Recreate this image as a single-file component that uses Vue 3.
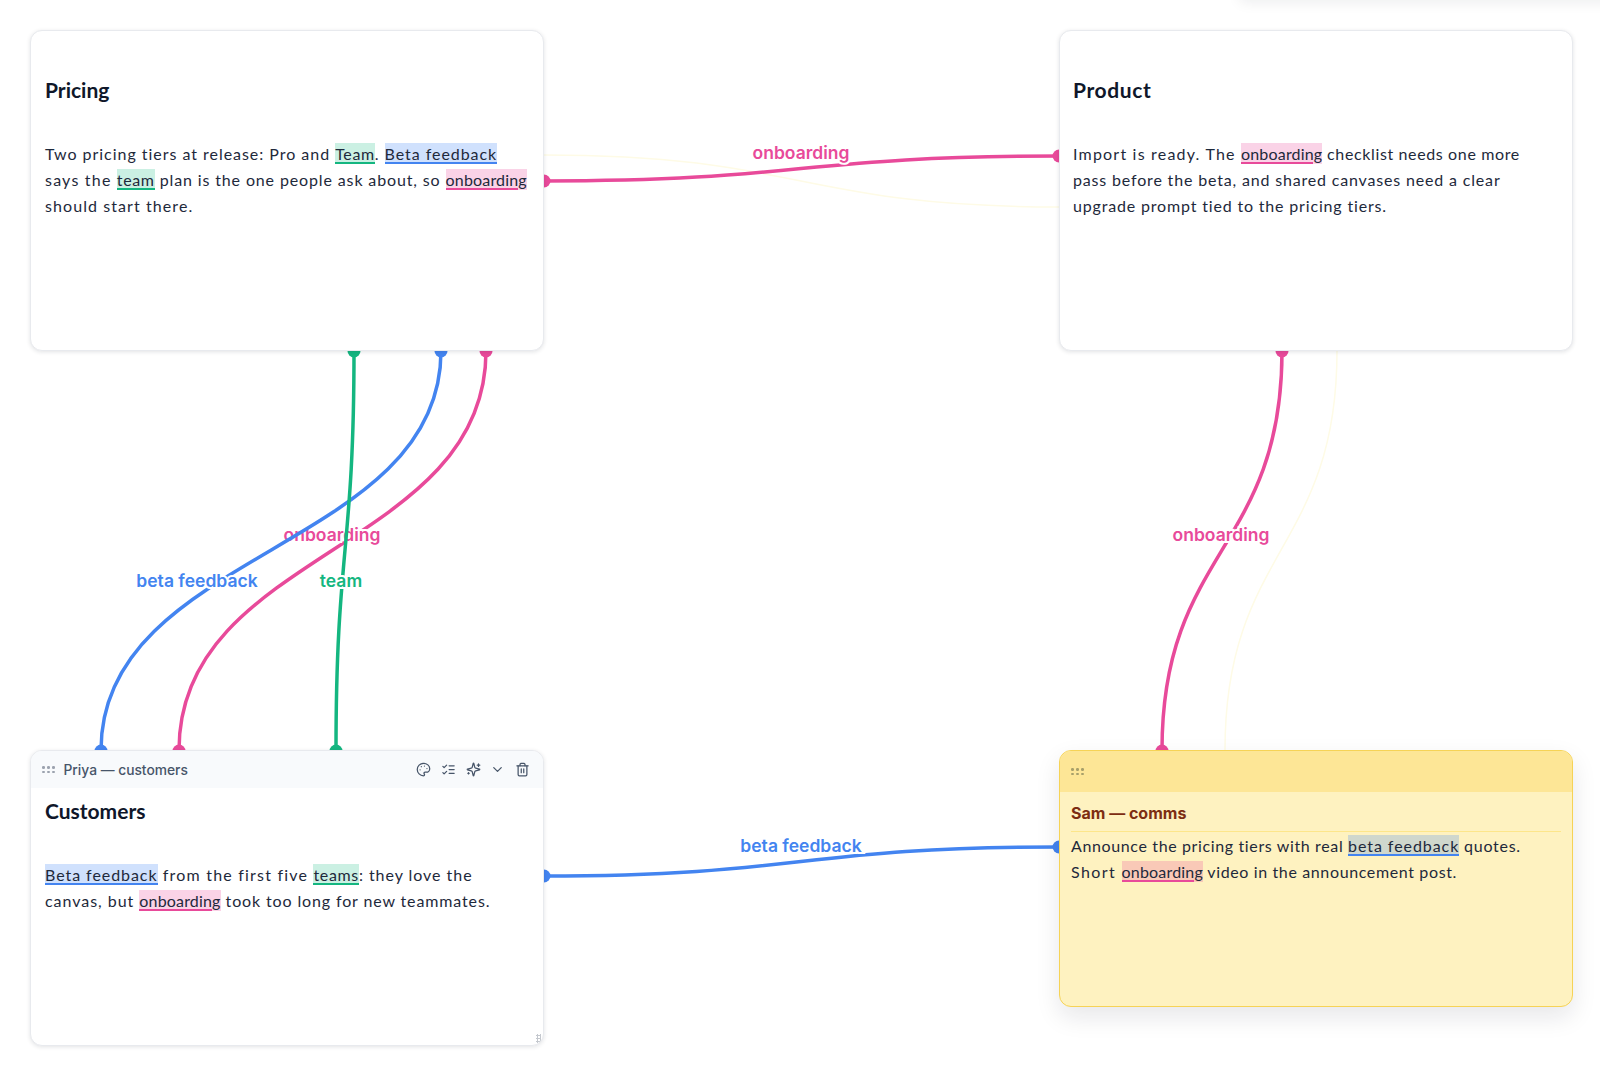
<script setup>
const edges = [
  { id: 'faint-a', kind: 'faint', d: 'M544 155 C801 155, 801 207, 1059 207' },
  { id: 'faint-b', kind: 'faint', d: 'M1337 351 C1337 550, 1225 550, 1225 750' },
  { id: 'p1', kind: 'pink', d: 'M544 181 C801 181, 801 156, 1059 156', dots: [[544, 181], [1059, 156]], label: 'onboarding', x: 801, y: 159 },
  { id: 'p2', kind: 'pink', d: 'M486 351 C486 550, 179 550, 179 750', dots: [[486, 351], [179, 751]], label: 'onboarding', x: 332, y: 541 },
  { id: 'p3', kind: 'pink', d: 'M1282 351 C1282 550, 1162 550, 1162 750', dots: [[1282, 351], [1162, 751]], label: 'onboarding', x: 1221, y: 541 },
  { id: 'b1', kind: 'blue', d: 'M441 351 C441 550, 101 550, 101 750', dots: [[441, 351], [101, 751]], label: 'beta feedback', x: 197, y: 587 },
  { id: 'b2', kind: 'blue', d: 'M544 876 C801 876, 801 847, 1059 847', dots: [[544, 876], [1059, 847]], label: 'beta feedback', x: 801, y: 852 },
  { id: 'g1', kind: 'green', d: 'M354 351 C354 550, 336 550, 336 750', dots: [[354, 351], [336, 751]], label: 'team', x: 341, y: 587 },
]
const icons = [
  { id: 'palette', paths: ['M12 2C6.5 2 2 6.5 2 12s4.5 10 10 10c.926 0 1.648-.746 1.648-1.688 0-.437-.18-.835-.437-1.125-.29-.289-.438-.652-.438-1.125a1.64 1.64 0 0 1 1.668-1.668h1.996c3.051 0 5.555-2.503 5.555-5.554C21.965 6.012 17.461 2 12 2z', 'M13.5 6.5h.01', 'M17.5 10.5h.01', 'M8.5 7.5h.01', 'M6.5 12.5h.01'] },
  { id: 'checks', paths: ['m3 17 2 2 4-4', 'm3 7 2 2 4-4', 'M13 6h8', 'M13 12h8', 'M13 18h8'] },
  { id: 'sparkles', paths: ['M9.937 15.5A2 2 0 0 0 8.5 14.063l-6.135-1.582a.5.5 0 0 1 0-.962L8.5 9.936A2 2 0 0 0 9.937 8.5l1.582-6.135a.5.5 0 0 1 .963 0L14.063 8.5A2 2 0 0 0 15.5 9.937l6.135 1.581a.5.5 0 0 1 0 .964L15.5 14.063a2 2 0 0 0-1.437 1.437l-1.582 6.135a.5.5 0 0 1-.963 0z', 'M20 3v4', 'M22 5h-4', 'M4 17v2', 'M5 18H3'] },
  { id: 'chevron', paths: ['m6 9 6 6 6-6'] },
  { id: 'trash', paths: ['M3 6h18', 'M19 6v14c0 1-1 2-2 2H7c-1 0-2-1-2-2V6', 'M8 6V4c0-1 1-2 2-2h4c1 0 2 1 2 2v2', 'M10 11v6', 'M14 11v6'] },
]
</script>

<template>
  <div class="canvas">
    <div class="top-shade"></div>

    <svg class="wires" width="1600" height="1072" viewBox="0 0 1600 1072">
      <g v-for="e in edges" :key="e.id" :class="e.kind">
        <path class="wire" :d="e.d" />
        <circle v-for="(p, i) in e.dots || []" :key="i" :cx="p[0]" :cy="p[1]" r="6.5" class="dot" />
        <text v-if="e.label" :x="e.x" :y="e.y" text-anchor="middle" class="wire-label">{{ e.label }}</text>
      </g>
    </svg>

    <article class="note note-pricing">
      <h2 class="title">Pricing</h2>
      <p class="body">Two pricing tiers at release: Pro and <mark class="hl green">Team</mark>. <mark class="hl blue">Beta feedback</mark><br><span class="loose">says the </span><mark class="hl green">team</mark><span class="tight"> plan is the one people ask about, so </span><mark class="hl pink">onboarding</mark><br><span class="wide">should start there.</span></p>
    </article>

    <article class="note note-product">
      <h2 class="title">Product</h2>
      <p class="body"><span class="loose">Import is ready. The </span><mark class="hl pink">onboarding</mark><span class="snug"> checklist needs one more</span><br>pass before the beta, and shared canvases need a clear<br>upgrade prompt tied to the pricing tiers.</p>
    </article>

    <article class="note note-customers">
      <header class="bar">
        <span class="grip"><i v-for="n in 6" :key="n"></i></span>
        <span class="author">Priya — customers</span>
        <span class="tools">
          <svg v-for="ic in icons" :key="ic.id" class="tool" viewBox="0 0 24 24">
            <path v-for="(d, i) in ic.paths" :key="i" :d="d" />
          </svg>
        </span>
      </header>
      <h2 class="title">Customers</h2>
      <p class="body"><mark class="hl blue">Beta feedback</mark><span class="loose"> from the first five </span><mark class="hl green">teams</mark>: they love the<br>canvas, but <mark class="hl pink">onboarding</mark><span class="tight"> took too long for new teammates.</span></p>
      <span class="resize"></span>
    </article>

    <article class="note note-comms">
      <header class="bar">
        <span class="grip"><i v-for="n in 6" :key="n"></i></span>
      </header>
      <div class="comms-main">
        <h3 class="comms-title">Sam — comms</h3>
        <p class="body"><span class="snug">Announce the pricing tiers with real </span><mark class="hl blue">beta feedback</mark> quotes.<br><span class="airy">Short </span><mark class="hl pink">onboarding</mark><span class="snug"> video in the announcement post.</span></p>
      </div>
    </article>
  </div>
</template>

<style>
html, body { margin: 0; background: #fff; }
</style>

<style scoped>
.canvas {
  position: relative;
  width: 1600px;
  height: 1072px;
  overflow: hidden;
  background: #fff;
  font-family: "Lato", "Open Sans", sans-serif;
  color: #1e293b;
}
.top-shade {
  position: absolute;
  left: 1240px;
  top: -40px;
  width: 400px;
  height: 40px;
  box-shadow: 0 2px 14px rgba(15, 23, 42, 0.08);
}
.wires { position: absolute; left: 0; top: 0; }
.wire { fill: none; stroke-width: 3.5; stroke-linecap: round; }
.faint .wire { stroke: #fefbe6; stroke-width: 1.5; }
.pink .wire { stroke: #e84a9a; }
.blue .wire { stroke: #4384f0; }
.green .wire { stroke: #14b680; }
.pink .dot, .pink .wire-label { fill: #e84a9a; }
.blue .dot, .blue .wire-label { fill: #4384f0; }
.green .dot, .green .wire-label { fill: #14b680; }
.wire-label {
  font-family: "Inter", sans-serif;
  font-size: 17.5px;
  font-weight: 600;
  stroke: #fff;
  stroke-width: 4px;
  paint-order: stroke;
}
.note {
  position: absolute;
  box-sizing: border-box;
  display: flex;
  flex-direction: column;
  width: 514px;
  background: #fff;
  border: 1px solid #e8eaee;
  border-radius: 12px;
  box-shadow: 0 1px 4px rgba(15, 23, 42, 0.12);
  overflow: hidden;
}
.note-pricing { left: 30px; top: 30px; height: 321px; padding: 44px 14px 0; }
.note-product { left: 1059px; top: 30px; height: 321px; padding: 44px 13px 0; }
.note-customers { left: 30px; top: 750px; height: 296px; padding: 0 14px; }
.note-comms {
  left: 1059px;
  top: 750px;
  height: 257px;
  background: #fef2c0;
  border: 1.5px solid #f6d356;
  box-shadow: 0 10px 24px rgba(15, 23, 42, 0.1);
}
.title {
  margin: 0 0 36px;
  font-size: 21px;
  line-height: 30px;
  font-weight: 700;
  color: #0f172a;
}
.note-product .title { letter-spacing: 0.6px; }
.body {
  margin: 0;
  font-size: 16px;
  line-height: 26px;
  letter-spacing: 0.97px;
  white-space: nowrap;
  color: #1e293b;
}
.note-product .body { letter-spacing: 0.83px; }
.note-customers .body { letter-spacing: 0.96px; }
.note-comms .body { letter-spacing: 0.73px; }
.body .loose { letter-spacing: 1.2px; }
.body .wide { letter-spacing: 1.08px; }
.body .tight { letter-spacing: 0.87px; }
.body .snug { letter-spacing: 0.63px; }
.body .airy { letter-spacing: 1.4px; }
.hl {
  color: inherit;
  padding: 1px 0;
  background-repeat: no-repeat;
  background-position: left bottom;
  background-size: 100% 2.5px;
}
.hl.green { letter-spacing: 0.65px; background-color: rgba(16, 185, 129, 0.22); background-image: linear-gradient(#14b680, #14b680); }
.hl.blue { letter-spacing: 0.94px; background-color: rgba(59, 130, 246, 0.24); background-image: linear-gradient(#4384f0, #4384f0); }
.hl.pink { letter-spacing: 0.18px; background-color: rgba(236, 72, 153, 0.24); background-image: linear-gradient(#e84a9a, #e84a9a); background-size: calc(100% - 9px) 2.5px; }
.bar {
  display: flex;
  align-items: center;
  flex: none;
  height: 37px;
  margin: 0 -14px 8px;
  padding: 0 13px 0 11px;
  background: #f8fafc;
  gap: 9px;
}
.grip {
  display: grid;
  grid-template-columns: repeat(3, 2.5px);
  gap: 2px 2.5px;
  width: 12.5px;
}
.grip i { width: 2.5px; height: 2.5px; border-radius: 50%; background: #9ca3af; }
.author { font-family: "Inter", sans-serif; font-size: 13.8px; font-weight: 500; color: #475569; }
.tools { margin-left: auto; display: flex; align-items: center; gap: 9.75px; }
.tool {
  width: 15px;
  height: 15px;
  fill: none;
  stroke: #475569;
  stroke-width: 2;
  stroke-linecap: round;
  stroke-linejoin: round;
}
.resize {
  position: absolute;
  right: 2px;
  bottom: 2px;
  width: 5px;
  height: 9px;
  background: radial-gradient(circle, #c4c8ce 1px, transparent 1.2px) 0 0 / 3px 3px;
}
.note-comms .bar {
  height: 41px;
  margin: 0;
  background: #fde696;
}
.note-comms .grip i { background: #a8a06a; }
.comms-main { padding: 9px 11px 0; }
.comms-title {
  margin: 0 0 1px;
  padding-bottom: 6px;
  border-bottom: 1.5px solid #fde68a;
  font-family: "Inter", sans-serif;
  font-size: 16px;
  line-height: 24px;
  font-weight: 700;
  color: #7c2d12;
}
</style>
